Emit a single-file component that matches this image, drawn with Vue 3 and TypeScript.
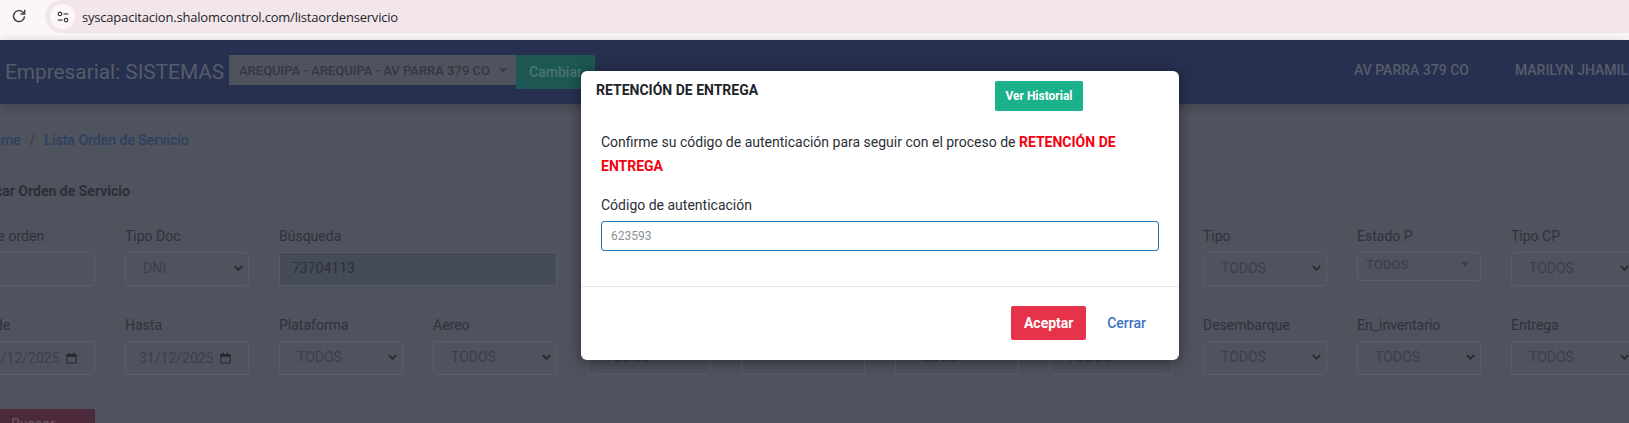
<script setup lang="ts">
interface Field {
  label: string
  value?: string
  kind: 'select' | 'input' | 'date' | 'select2'
  wide?: boolean
}

const rowOne: Field[] = [
  { label: 'N° de orden', kind: 'input' },
  { label: 'Tipo Doc', value: 'DNI', kind: 'select' },
  { label: 'Búsqueda', value: '73704113', kind: 'input', wide: true },
  { label: 'Estado', value: 'TODOS', kind: 'select' },
  { label: 'Zona', value: 'TODOS', kind: 'select' },
  { label: 'Grupo', value: 'TODOS', kind: 'select' },
  { label: 'Origen', value: 'TODOS', kind: 'select' },
  { label: 'Tipo', value: 'TODOS', kind: 'select' },
  { label: 'Estado P', value: 'TODOS', kind: 'select2' },
  { label: 'Tipo CP', value: 'TODOS', kind: 'select' },
]

const rowTwo: Field[] = [
  { label: 'Desde', value: '01/12/2025', kind: 'date' },
  { label: 'Hasta', value: '31/12/2025', kind: 'date' },
  { label: 'Plataforma', value: 'TODOS', kind: 'select' },
  { label: 'Aereo', value: 'TODOS', kind: 'select' },
  { label: 'Pago', value: 'TODOS', kind: 'select' },
  { label: 'Guia', kind: 'input' },
  { label: 'Cargo', value: 'TODOS', kind: 'select' },
  { label: 'Retenido', value: 'TODOS', kind: 'select' },
  { label: 'Desembarque', value: 'TODOS', kind: 'select' },
  { label: 'En_inventario', value: 'TODOS', kind: 'select' },
  { label: 'Entrega', value: 'TODOS', kind: 'select' },
]

const rows = [rowOne, rowTwo]
</script>

<template>
  <div class="screen">
    <header class="browser-bar">
      <svg class="reload" viewBox="0 0 16 16" fill="none" stroke="#444" stroke-width="1.5">
        <path d="M13.500 8.200a5.500 5.500 0 1 1-1.600-4L13.500 5.800" />
        <path d="M13.700 1.800V6H9.500" stroke-width="1.400" />
      </svg>
      <div class="omnibox">
        <span class="site-icon">
          <svg viewBox="0 0 16 16" fill="none" stroke="#333" stroke-width="1.3">
            <circle cx="4.5" cy="4.5" r="2" />
            <path d="M8.5 4.5H14" />
            <path d="M2 11.5h5.5" />
            <circle cx="11.5" cy="11.5" r="2" />
          </svg>
        </span>
        <span class="url">syscapacitacion.shalomcontrol.com/listaordenservicio</span>
      </div>
    </header>

    <nav class="navbar">
      <span class="brand">Empresarial: SISTEMAS</span>
      <div class="branch">
        <span>AREQUIPA - AREQUIPA - AV PARRA 379 CO</span>
        <i class="caret" />
      </div>
      <button class="change">Cambiar</button>
      <div class="nav-right">
        <span class="nav-item">AV PARRA 379 CO</span>
        <span class="nav-item">MARILYN JHAMILE</span>
      </div>
    </nav>

    <main class="content">
      <div class="crumbs">
        <span class="crumb-home">Home</span>
        <span class="crumb-sep">/</span>
        <span class="crumb-link">Lista Orden de Servicio</span>
      </div>

      <section class="card">
        <h2 class="card-title">Buscar Orden de Servicio</h2>
        <div class="form">
          <div v-for="(row, r) in rows" :key="r" class="form-row">
            <div v-for="f in row" :key="f.label" class="field" :class="{ wide: f.wide }">
              <label>{{ f.label }}</label>
              <div class="box" :class="[f.kind, { filled: f.wide }]">
                <span class="value">{{ f.value }}</span>
                <svg v-if="f.kind === 'select'" class="chevron" viewBox="0 0 10 6" fill="none" stroke="#252830" stroke-width="2">
                  <path d="M1 1l4 4 4-4" />
                </svg>
                <svg v-else-if="f.kind === 'date'" class="calendar" viewBox="0 0 12 12" fill="#252830">
                  <path d="M1 1.500h2V0h1.200v1.500h3.600V0H9v1.500h2a.7.7 0 0 1 .7.7v9.100a.7.7 0 0 1-.7.7H1a.7.7 0 0 1-.7-.7V2.200a.7.7 0 0 1 .7-.7zm.5 3v6.300h9V4.500z" />
                </svg>
                <i v-else-if="f.kind === 'select2'" class="caret small" />
              </div>
            </div>
          </div>
        </div>
        <button class="search">Buscar</button>
      </section>
    </main>

    <div class="modal">
      <div class="modal-head">
        <h3>RETENCIÓN DE ENTREGA</h3>
        <button class="history">Ver Historial</button>
      </div>
      <div class="modal-body">
        <p>Confirme su código de autenticación para seguir con el proceso de <strong>RETENCIÓN DE ENTREGA</strong></p>
        <label for="auth">Código de autenticación</label>
        <input id="auth" type="text" placeholder="623593" />
      </div>
      <div class="modal-foot">
        <button class="accept">Aceptar</button>
        <button class="close">Cerrar</button>
      </div>
    </div>
  </div>
</template>

<style>
html, body {
  margin: 0;
  background: #4f535e;
}
</style>

<style scoped>
.screen {
  position: relative;
  width: 1629px;
  height: 423px;
  overflow: hidden;
  background: #4f535e;
  font-family: Roboto, "Liberation Sans", sans-serif;
  font-size: 14px;
  color: #2d313b;
}

/* browser chrome */
.browser-bar {
  display: flex;
  align-items: flex-start;
  height: 40px;
  box-sizing: border-box;
  padding-left: 11px;
  background: #fdf6f6;
}
.reload {
  width: 16px;
  height: 16px;
  margin-top: 8px;
}
.omnibox {
  display: flex;
  align-items: center;
  flex: 1;
  height: 33px;
  margin-left: 18px;
  padding-left: 5px;
  border-radius: 17px 0 0 17px;
  background: #f3e6ea;
}
.site-icon {
  display: flex;
  align-items: center;
  justify-content: center;
  width: 25px;
  height: 25px;
  border-radius: 50%;
  background: #fdf6f6;
}
.site-icon svg {
  width: 14px;
  height: 14px;
}
.url {
  margin-left: 7px;
  font-family: "Open Sans", "Noto Sans", sans-serif;
  font-size: 13px;
  letter-spacing: -0.2px;
  color: #22252c;
}

/* navbar */
.navbar {
  position: relative;
  display: flex;
  align-items: flex-start;
  height: 64px;
  box-sizing: border-box;
  padding: 15px 0 0 5px;
  background: #283050;
  box-shadow: 0 2px 10px rgba(0, 0, 0, 0.2);
}
.brand {
  flex: none;
  width: 219px;
  margin-top: 3px;
  font-size: 20.8px;
  line-height: 28px;
  color: #555c69;
  white-space: nowrap;
}
.branch {
  display: flex;
  flex: none;
  align-items: center;
  justify-content: space-between;
  box-sizing: border-box;
  width: 287px;
  height: 30px;
  margin-left: 5px;
  padding: 0 9px 0 10px;
  background: #4f535e;
  font-size: 13px;
  font-weight: 500;
  color: #343843;
  white-space: nowrap;
}
.caret {
  width: 0;
  height: 0;
  border-left: 4px solid transparent;
  border-right: 4px solid transparent;
  border-top: 5px solid #3c404b;
}
.change {
  flex: none;
  width: 79px;
  height: 34px;
  padding: 0;
  border: 0;
  border-radius: 0 2px 2px 0;
  background: #1d5753;
  font: 500 14px Roboto, sans-serif;
  color: #4a7570;
}
.nav-right {
  display: flex;
  flex: none;
  gap: 46px;
  margin-left: 759px;
  margin-top: 7px;
  white-space: nowrap;
}
.nav-item {
  font-weight: 500;
  font-size: 14px;
  color: #565d6b;
}

/* page */
.content {
  margin-left: -29px;
}
.crumbs {
  display: flex;
  align-items: center;
  gap: 9px;
  width: 1700px;
  height: 41px;
  margin-top: 15px;
  padding-left: 12px;
  border-top: 1px solid #525661;
  border-bottom: 1px solid #525661;
  box-sizing: border-box;
  color: #2c4060;
  font-weight: 500;
}
.crumb-sep {
  color: #373b46;
  font-weight: 400;
}
.crumb-link,
.crumb-home {
  white-space: nowrap;
}
.card {
  width: 1700px;
  margin-top: 12px;
  border-top: 1px solid #525661;
}
.card-title {
  margin: 0;
  height: 39px;
  padding-left: 0;
  box-sizing: border-box;
  border-bottom: 1px solid #525661;
  font-size: 14px;
  font-weight: 700;
  line-height: 36px;
  color: #2a2e38;
}
.form {
  display: flex;
  flex-direction: column;
  gap: 29px;
  padding-top: 14px;
}
.form-row {
  display: grid;
  grid-template-columns: repeat(11, 124px);
  column-gap: 30px;
}
.field.wide {
  grid-column: span 2;
}
.field label {
  display: block;
  height: 21px;
  margin-bottom: 5px;
  line-height: 21px;
  color: #2e323c;
  white-space: nowrap;
}
.box {
  display: flex;
  align-items: center;
  justify-content: space-between;
  box-sizing: border-box;
  height: 34px;
  padding: 0 5px 2px 17px;
  border: 1px solid #595d68;
  border-radius: 2px;
  color: #3a404c;
}
.box.input {
  padding-left: 12px;
}
.box.filled {
  background: #454b58;
  color: #2d313b;
}
.box.date {
  justify-content: flex-start;
  gap: 6px;
  padding: 0 0 0 13px;
}
.box.select2 {
  height: 29px;
  padding: 0 11px 4px 8px;
  font-size: 13px;
  font-weight: 500;
}
.chevron {
  width: 9px;
  height: 6px;
  flex: none;
}
.calendar {
  width: 11px;
  height: 12px;
  flex: none;
}
.search {
  display: block;
  width: 124px;
  height: 38px;
  margin-top: 34px;
  padding: 0 0 8px 0;
  border: 0;
  border-radius: 2px;
  background: #4c2a3b;
  font: 400 14px Roboto, sans-serif;
  color: #6f5a66;
}

/* dialog */
.modal {
  position: absolute;
  top: 71px;
  left: 581px;
  width: 598px;
  height: 289px;
  border-radius: 6px;
  background: #fff;
  box-shadow: 0 2px 14px rgba(0, 0, 0, 0.45);
  color: #2b2f36;
}
.modal-head {
  display: flex;
  align-items: flex-start;
  height: 59px;
  box-sizing: border-box;
  padding: 10px 15px 0;
}
.modal-head h3 {
  flex: none;
  width: 162px;
  margin: 0;
  font-size: 14px;
  font-weight: 700;
  line-height: 18px;
  color: #212529;
  white-space: nowrap;
}
.history {
  width: 88px;
  height: 30px;
  margin-left: 237px;
  padding: 0;
  border: 0;
  border-radius: 2px;
  background: #1bb28b;
  font: 700 12px Roboto, sans-serif;
  color: #fff;
}
.modal-body {
  height: 157px;
  box-sizing: border-box;
  padding: 0 20px;
  border-bottom: 1px solid #e7e9ec;
}
.modal-body p {
  margin: 0 0 17px;
  line-height: 24px;
}
.modal-body strong {
  color: #f5000f;
}
.modal-body label {
  display: block;
  margin-bottom: 5px;
  line-height: 21px;
}
.modal-body input {
  display: block;
  width: 100%;
  height: 30px;
  box-sizing: border-box;
  padding: 0 9px;
  border: 1.5px solid #1b75bb;
  border-radius: 3px;
  outline: 0;
  font: 12px Roboto, sans-serif;
}
.modal-body input::placeholder {
  color: #8a8f96;
}
.modal-foot {
  display: flex;
  align-items: flex-start;
  justify-content: flex-end;
  gap: 9px;
  padding: 19px 21px 0 0;
}
.accept {
  width: 75px;
  height: 34px;
  padding: 0;
  border: 0;
  border-radius: 2px;
  background: #e63349;
  font: 700 14px Roboto, sans-serif;
  color: #fff;
}
.close {
  height: 34px;
  padding: 0 12px;
  border: 0;
  background: transparent;
  font: 500 14px Roboto, sans-serif;
  color: #3b73bf;
}
</style>
